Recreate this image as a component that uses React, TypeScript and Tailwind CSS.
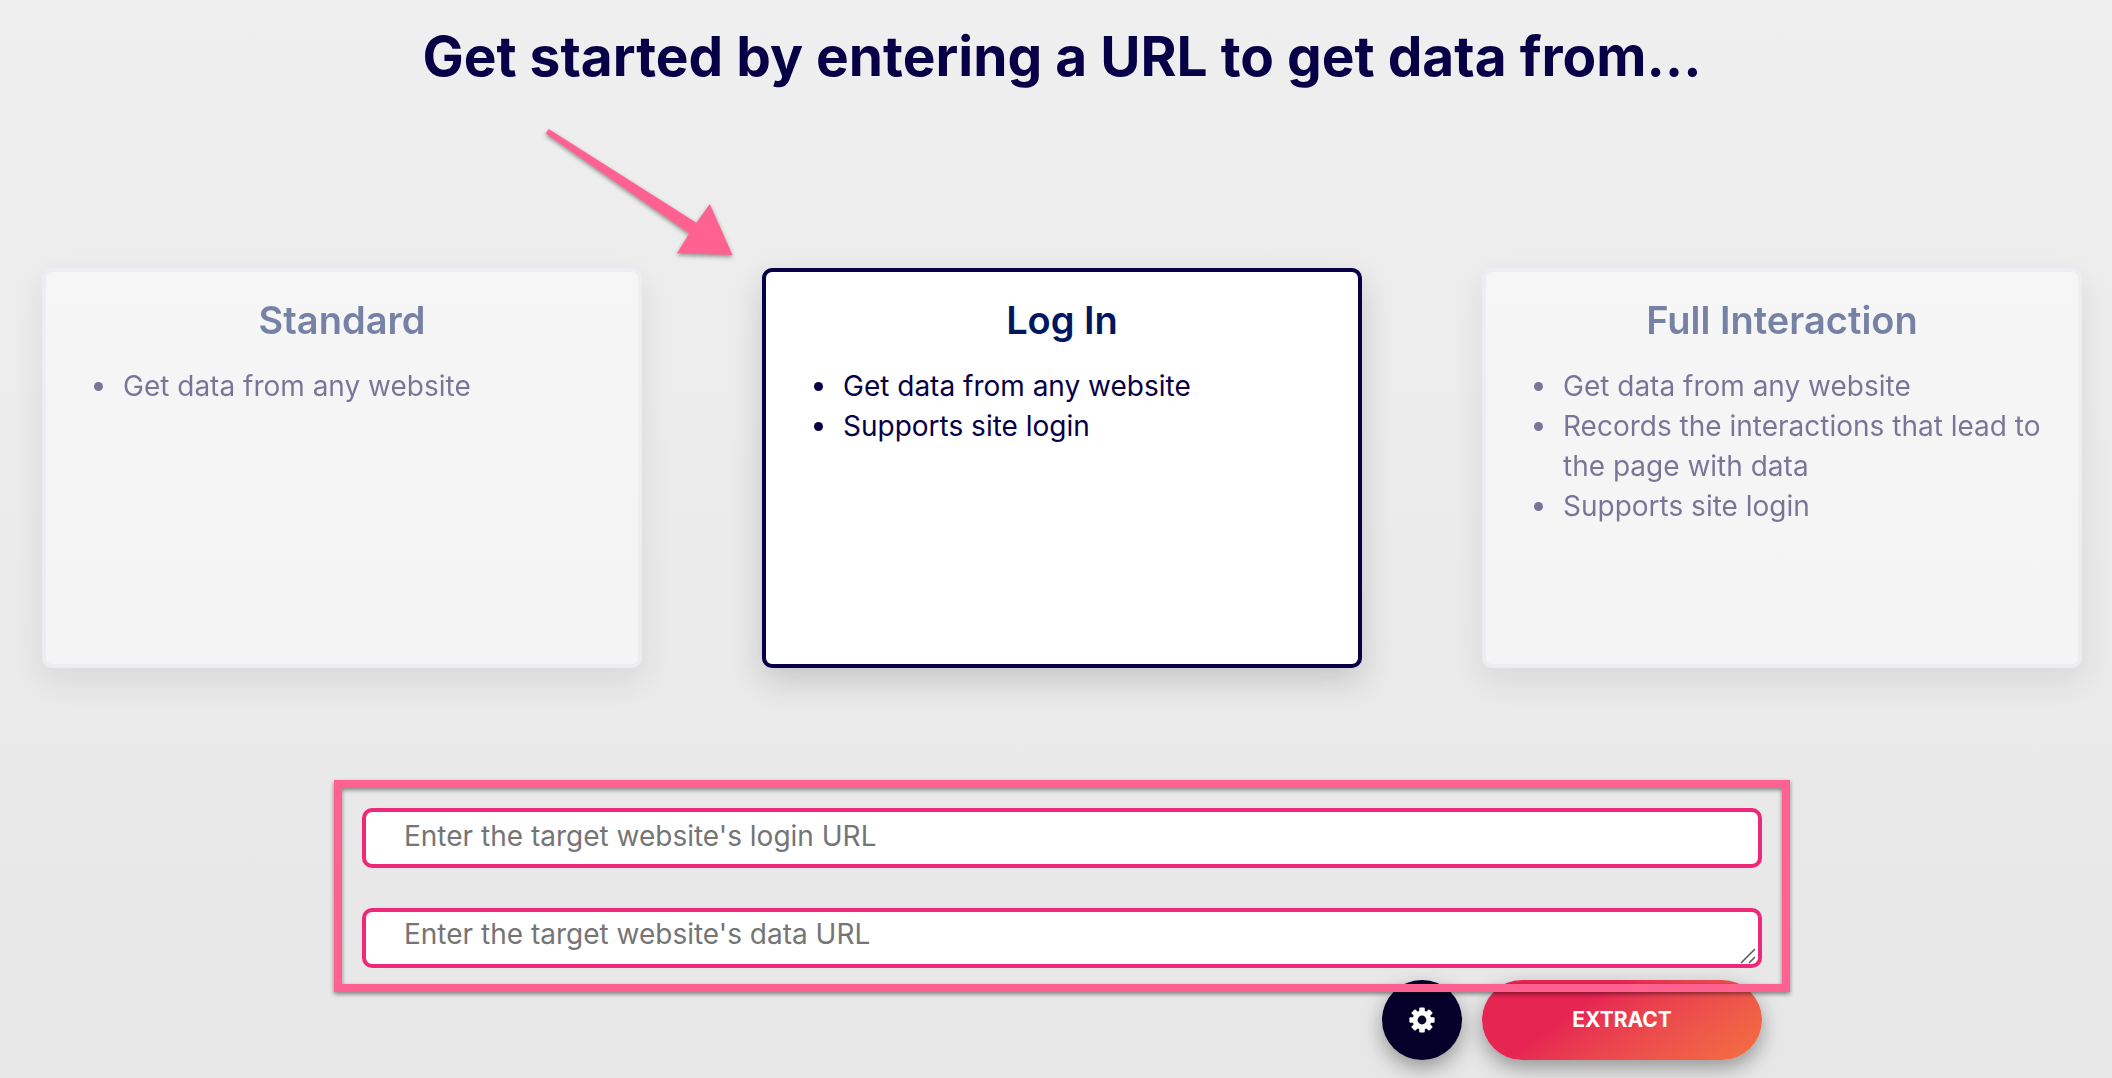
import { useState } from "react";

const modes = [
  {
    id: "standard",
    title: "Standard",
    points: ["Get data from any website"],
  },
  {
    id: "login",
    title: "Log In",
    points: ["Get data from any website", "Supports site login"],
  },
  {
    id: "interaction",
    title: "Full Interaction",
    points: [
      "Get data from any website",
      "Records the interactions that lead to the page with data",
      "Supports site login",
    ],
  },
];

const fieldClass =
  "block h-[60px] w-full rounded-[10px] border-4 border-[#ef2877] bg-white px-[38px] text-[28px] leading-10 text-[#080046] placeholder:text-[#757575] outline-none";

function GearIcon() {
  return (
    <svg viewBox="0 0 26 26" className="size-[26px]" aria-hidden="true">
      <g fill="#fff">
        {[0, 45, 90, 135].map((angle) => (
          <rect
            key={angle}
            x="10.2"
            y="0.4"
            width="5.6"
            height="25.2"
            rx="1"
            transform={`rotate(${angle} 13 13)`}
          />
        ))}
        <circle cx="13" cy="13" r="9.4" />
      </g>
      <circle cx="13" cy="13" r="4.4" fill="#05002a" />
    </svg>
  );
}

function ResizeGrip() {
  return (
    <svg
      viewBox="0 0 16 16"
      className="pointer-events-none absolute right-1.5 bottom-1 size-4"
      stroke="#555"
      strokeWidth="1.5"
      aria-hidden="true"
    >
      <path d="M1 15 L15 1 M9 15 L15 9" />
    </svg>
  );
}

function Arrow() {
  return (
    <svg
      viewBox="0 0 200 140"
      className="pointer-events-none absolute -top-[144px] -left-[222px] w-[200px] drop-shadow-[0_2px_2px_rgba(0,0,0,0.4)]"
      aria-hidden="true"
    >
      <path
        d="M8.7 5 L5.7 9.6 L149.3 109.5 L137 129.3 L192.5 131 L169.8 80 L156.4 98.7 Z"
        fill="#ff6291"
      />
    </svg>
  );
}

export default function App() {
  const [mode, setMode] = useState("login");

  return (
    <main className="min-h-screen w-full bg-linear-to-b from-[#efefef] to-[#e7e7e7] pt-6 pr-[30px] pb-[18px] pl-[42px] font-['Inter',sans-serif]">
      <h1 className="text-center text-[55px] leading-16 font-bold text-[#080046]">
        Get started by entering a URL to get data from…
      </h1>

      {/* Extractor type */}
      <div className="mt-[180px] grid grid-cols-3 gap-[120px]">
        {modes.map((m) => (
          <div key={m.id} className="relative">
            <label
              className={`relative block h-full min-h-[400px] cursor-pointer rounded-[10px] border-4 bg-white pt-6 pr-6 shadow-[0_12px_32px_rgba(0,0,0,0.16)] ${
                mode === m.id ? "border-[#080046]" : "border-[#eef0f7] opacity-50"
              }`}
            >
              <input
                type="radio"
                name="mode"
                className="sr-only"
                checked={mode === m.id}
                onChange={() => setMode(m.id)}
              />
              <h2 className="pl-6 text-center text-[38px] leading-12 font-semibold text-[#001860]">
                {m.title}
              </h2>
              <ul className="mt-[22px] list-disc pl-[73px] text-[28px] leading-10 text-[#080046]">
                {m.points.map((p) => (
                  <li key={p} className="pl-1">
                    {p}
                  </li>
                ))}
              </ul>
            </label>
            {m.id === "login" && <Arrow />}
          </div>
        ))}
      </div>

      <form
        className="mx-auto mt-[140px] w-full max-w-[1400px]"
        onSubmit={(e) => e.preventDefault()}
      >
        <div className="relative flex flex-col gap-10">
          <input
            type="text"
            aria-label="Login URL"
            placeholder="Enter the target website's login URL"
            className={`${fieldClass} pb-1`}
          />
          <div className="relative">
            <textarea
              aria-label="Data URL"
              rows={1}
              placeholder="Enter the target website's data URL"
              className={`${fieldClass} resize-none overflow-hidden pt-0.5`}
            />
            <ResizeGrip />
          </div>
          {/* Highlight frame, sits over the fields and the top of the buttons */}
          <div className="pointer-events-none absolute -inset-x-7 -top-7 -bottom-6 z-10 border-8 border-[#ff6291] drop-shadow-[0_2px_2px_rgba(0,0,0,0.45)]" />
        </div>

        <div className="mt-3 flex justify-end gap-5">
          <button
            type="button"
            aria-label="Settings"
            className="flex size-20 items-center justify-center rounded-full bg-[#05002a] shadow-[0_8px_20px_rgba(0,0,0,0.35)]"
          >
            <GearIcon />
          </button>
          <button
            type="submit"
            className="h-20 w-[280px] rounded-full bg-linear-145 from-[#e62552] from-35% to-[#f37040] text-[21px] font-bold text-white shadow-[0_8px_20px_rgba(0,0,0,0.35)]"
          >
            EXTRACT
          </button>
        </div>
      </form>
    </main>
  );
}
